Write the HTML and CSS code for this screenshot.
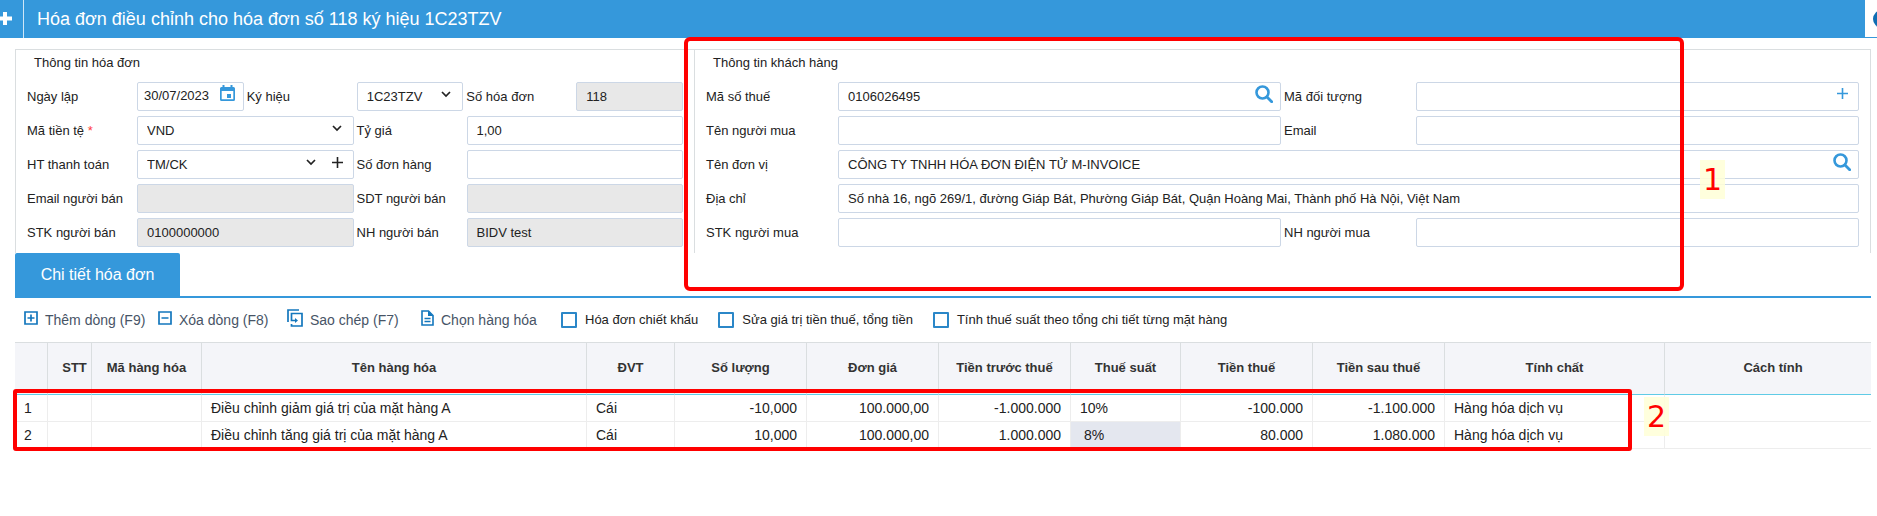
FILE: index.html
```html
<!DOCTYPE html>
<html lang="vi">
<head>
<meta charset="utf-8">
<title>Hóa đơn điều chỉnh</title>
<meta name="viewport" content="width=device-width, initial-scale=1">
<link rel="stylesheet" href="styles.css">
</head>
<body>
<header class="topbar">
  <button class="topbar-add" type="button" aria-label="Thêm">
    <svg width="12" height="13" viewBox="0 0 12 13"><path d="M0 6.500h12M5 0v13" stroke="currentColor" stroke-width="4"/></svg>
  </button>
  <h1 class="topbar-title">Hóa đơn điều chỉnh cho hóa đơn số 118 ký hiệu 1C23TZV</h1>
  <div class="topbar-end"><span class="topbar-dot"></span></div>
</header>

<main class="page">
  <form class="panels">
    <section class="panel panel-invoice">
      <h2 class="panel-title">Thông tin hóa đơn</h2>
      <div class="row">
        <label class="label" for="date">Ngày lập</label>
        <div class="field">
          <input class="input input-date" id="date" type="text" value="30/07/2023">
          <svg class="icon icon-date" width="15" height="17" viewBox="0 0 15 17"><path d="M2.500 0h2v2h6V0h2v2h1A1.500 1.500 0 0 1 15 3.500v11a1.500 1.500 0 0 1-1.500 1.500h-12A1.500 1.500 0 0 1 0 14.500v-11A1.500 1.500 0 0 1 1.500 2h1zM1.700 6v8.300h11.600V6zM7 9h4v4H7z" fill="currentColor" fill-rule="evenodd"/></svg>
        </div>
        <label class="label" for="serial">Ký hiệu</label>
        <div class="field">
          <select class="input" id="serial"><option>1C23TZV</option></select>
          <svg class="icon icon-chevron" width="10" height="7" viewBox="0 0 10 7"><path d="M1 1l4 4 4-4" fill="none" stroke="currentColor" stroke-width="1.700"/></svg>
        </div>
        <label class="label" for="number">Số hóa đơn</label>
        <div class="field"><input class="input" id="number" type="text" value="118" disabled></div>
      </div>
      <div class="row">
        <label class="label" for="currency">Mã tiền tệ <span class="required">*</span></label>
        <div class="field">
          <select class="input" id="currency"><option>VND</option></select>
          <svg class="icon icon-chevron" width="10" height="7" viewBox="0 0 10 7"><path d="M1 1l4 4 4-4" fill="none" stroke="currentColor" stroke-width="1.700"/></svg>
        </div>
        <label class="label" for="rate">Tỷ giá</label>
        <div class="field"><input class="input" id="rate" type="text" value="1,00"></div>
      </div>
      <div class="row">
        <label class="label" for="payment">HT thanh toán</label>
        <div class="field">
          <select class="input" id="payment"><option>TM/CK</option></select>
          <svg class="icon icon-chevron icon-shifted" width="10" height="7" viewBox="0 0 10 7"><path d="M1 1l4 4 4-4" fill="none" stroke="currentColor" stroke-width="1.700"/></svg>
          <svg class="icon icon-plus-dark" width="11" height="11" viewBox="0 0 11 11"><path d="M0 5.500h11M5.500 0v11" stroke="currentColor" stroke-width="1.600"/></svg>
        </div>
        <label class="label" for="order">Số đơn hàng</label>
        <div class="field"><input class="input" id="order" type="text"></div>
      </div>
      <div class="row">
        <label class="label" for="seller-email">Email người bán</label>
        <div class="field"><input class="input" id="seller-email" type="text" disabled></div>
        <label class="label" for="seller-phone">SDT người bán</label>
        <div class="field"><input class="input" id="seller-phone" type="text" disabled></div>
      </div>
      <div class="row">
        <label class="label" for="seller-account">STK người bán</label>
        <div class="field"><input class="input" id="seller-account" type="text" value="0100000000" disabled></div>
        <label class="label" for="seller-bank">NH người bán</label>
        <div class="field"><input class="input" id="seller-bank" type="text" value="BIDV test" disabled></div>
      </div>
    </section>

    <section class="panel panel-customer">
      <h2 class="panel-title">Thông tin khách hàng</h2>
      <div class="row">
        <label class="label" for="tax">Mã số thuế</label>
        <div class="field">
          <input class="input" id="tax" type="text" value="0106026495">
          <svg class="icon icon-search" width="18" height="18" viewBox="0 0 18 18"><circle cx="7.500" cy="7.500" r="6" fill="none" stroke="currentColor" stroke-width="2.600"/><path d="M12 12l4.700 4.700" stroke="currentColor" stroke-width="2.800" stroke-linecap="round"/></svg>
        </div>
        <label class="label" for="object">Mã đối tượng</label>
        <div class="field">
          <input class="input" id="object" type="text">
          <svg class="icon icon-plus" width="11" height="11" viewBox="0 0 11 11"><path d="M0 5.500h11M5.500 0v11" stroke="currentColor" stroke-width="1.600"/></svg>
        </div>
      </div>
      <div class="row">
        <label class="label" for="buyer">Tên người mua</label>
        <div class="field"><input class="input" id="buyer" type="text"></div>
        <label class="label" for="email">Email</label>
        <div class="field"><input class="input" id="email" type="text"></div>
      </div>
      <div class="row">
        <label class="label" for="company">Tên đơn vị</label>
        <div class="field">
          <input class="input" id="company" type="text" value="CÔNG TY TNHH HÓA ĐƠN ĐIỆN TỬ M-INVOICE">
          <svg class="icon icon-search" width="18" height="18" viewBox="0 0 18 18"><circle cx="7.500" cy="7.500" r="6" fill="none" stroke="currentColor" stroke-width="2.600"/><path d="M12 12l4.700 4.700" stroke="currentColor" stroke-width="2.800" stroke-linecap="round"/></svg>
        </div>
      </div>
      <div class="row">
        <label class="label" for="address">Địa chỉ</label>
        <div class="field"><input class="input" id="address" type="text" value="Số nhà 16, ngõ 269/1, đường Giáp Bát, Phường Giáp Bát, Quận Hoàng Mai, Thành phố Hà Nội, Việt Nam"></div>
      </div>
      <div class="row">
        <label class="label" for="buyer-account">STK người mua</label>
        <div class="field"><input class="input" id="buyer-account" type="text"></div>
        <label class="label" for="buyer-bank">NH người mua</label>
        <div class="field"><input class="input" id="buyer-bank" type="text"></div>
      </div>
    </section>
  </form>

  <nav class="tabs"><button class="tab" type="button">Chi tiết hóa đơn</button></nav>

  <div class="toolbar">
    <button class="tool tool-add" type="button"><svg width="14" height="14" viewBox="0 0 14 14"><path d="M1 1h12v12H1zM3.500 7h7M7 3.500v7" fill="none" stroke="currentColor" stroke-width="1.700"/></svg>Thêm dòng (F9)</button>
    <button class="tool tool-remove" type="button"><svg width="14" height="14" viewBox="0 0 14 14"><path d="M1 1h12v12H1zM3.500 7h7" fill="none" stroke="currentColor" stroke-width="1.700"/></svg>Xóa dòng (F8)</button>
    <button class="tool tool-copy" type="button"><svg width="16" height="18" viewBox="0 0 16 18"><path d="M1 13V1h11M4.500 15v2H15V4.500H4.500v7H9" fill="none" stroke="currentColor" stroke-width="1.700"/><path d="M8 9l3 2.500L8 14z" fill="currentColor"/></svg>Sao chép (F7)</button>
    <button class="tool tool-pick" type="button"><svg width="13" height="16" viewBox="0 0 13 16"><path d="M1 1h6.500L12 5.500V15H1zM3.500 8.500h6M3.500 11.500h6" fill="none" stroke="currentColor" stroke-width="1.600"/><path d="M7 1v5h5z" fill="currentColor"/></svg>Chọn hàng hóa</button>
    <label class="check"><input class="checkbox" type="checkbox">Hóa đơn chiết khấu</label>
    <label class="check"><input class="checkbox" type="checkbox">Sửa giá trị tiền thuế, tổng tiền</label>
    <label class="check"><input class="checkbox" type="checkbox">Tính thuế suất theo tổng chi tiết từng mặt hàng</label>
  </div>

  <table class="grid">
    <colgroup>
      <col class="w-index"><col class="w-stt"><col class="w-code"><col class="w-name"><col class="w-unit"><col class="w-money"><col class="w-money"><col class="w-money"><col class="w-code"><col class="w-money"><col class="w-money"><col class="w-kind"><col>
    </colgroup>
    <thead>
      <tr><th></th><th class="inset">STT</th><th>Mã hàng hóa</th><th>Tên hàng hóa</th><th>ĐVT</th><th>Số lượng</th><th>Đơn giá</th><th>Tiền trước thuế</th><th>Thuế suất</th><th>Tiền thuế</th><th>Tiền sau thuế</th><th>Tính chất</th><th class="inset">Cách tính</th></tr>
    </thead>
    <tbody>
      <tr><td>1</td><td></td><td></td><td>Điều chỉnh giảm giá trị của mặt hàng A</td><td>Cái</td><td class="num">-10,000</td><td class="num">100.000,00</td><td class="num">-1.000.000</td><td>10%</td><td class="num">-100.000</td><td class="num">-1.100.000</td><td>Hàng hóa dịch vụ</td><td></td></tr>
      <tr><td>2</td><td></td><td></td><td>Điều chỉnh tăng giá trị của mặt hàng A</td><td>Cái</td><td class="num">10,000</td><td class="num">100.000,00</td><td class="num">1.000.000</td><td class="selected">8%</td><td class="num">80.000</td><td class="num">1.080.000</td><td>Hàng hóa dịch vụ</td><td></td></tr>
    </tbody>
  </table>
</main>

<div class="mark mark-customer"></div>
<div class="mark mark-rows"></div>
<div class="note note-customer">1</div>
<div class="note note-rows">2</div>
</body>
</html>
```

FILE: styles.css
```css
* { box-sizing: border-box; }

body {
  margin: 0;
  position: relative;
  min-height: 100vh;
  background: #fff;
  color: #222;
  font: 13px/16px "Liberation Sans", Arial, sans-serif;
}

button, input, select { font: inherit; color: inherit; margin: 0; }

/* Title bar */
.topbar {
  display: flex;
  height: 38px;
  background: #3598db;
  color: #fff;
}
.topbar-add {
  width: 24px;
  padding: 0 0 2px;
  border: 0;
  border-right: 1px solid #cfe6f7;
  background: none;
  text-align: left;
}
.topbar-add svg { display: block; }
.topbar-title {
  flex: 1;
  margin: 0;
  padding-left: 13px;
  font-size: 18px;
  font-weight: 400;
  line-height: 38px;
}
.topbar-end {
  display: flex;
  align-items: center;
  width: 12px;
  overflow: hidden;
  border-bottom: 1px solid #3598db;
  background: #fff;
  padding-left: 8px;
}
.topbar-dot {
  flex: none;
  width: 18px;
  height: 18px;
  border-radius: 50%;
  background: #0f6db3;
}

.page { padding: 11px 6px 0 15px; }

/* Form panels */
.panels {
  display: grid;
  grid-template-columns: 678fr 1176fr;
  border: 1px solid #dadee0;
  border-bottom: 0;
}
.panel {
  display: flex;
  flex-direction: column;
  gap: 5px;
  min-width: 0;
  padding: 0 11px 6px;
}
.panel-invoice { --label: 110px; }
.panel-customer { border-left: 1px solid #dadee0; --label: 132px; }
.panel-title {
  margin: 0;
  padding: 3px 7px 4px;
  font-size: 13px;
  font-weight: 400;
  line-height: 20px;
}
.row { display: flex; }
.label { flex: none; width: var(--label); line-height: 29px; }
.field + .label { margin-left: 3px; }
.required { color: #ff3b3b; }
.field { position: relative; flex: 1; min-width: 0; }
.input {
  display: block;
  width: 100%;
  height: 29px;
  padding: 0 9px;
  border: 1px solid #ccd7e6;
  border-radius: 2px;
  background: #fff;
  appearance: none;
}
.input:disabled { background: #e8e8e8; color: #222; opacity: 1; }
.input-date { padding: 0 6px 3px; }
.icon { position: absolute; pointer-events: none; }
.icon-date { top: 3px; right: 9px; color: #3598db; }
.icon-chevron { top: 9px; right: 12px; }
.icon-shifted { right: 38px; }
.icon-plus-dark { top: 7px; right: 11px; }
.icon-search { top: 3px; right: 8px; color: #3598db; }
.icon-plus { top: 6px; right: 11px; color: #3598db; }

/* Tabs */
.tabs { display: flex; height: 45px; border-bottom: 2px solid #3598db; }
.tab {
  width: 165px;
  border: 0;
  border-radius: 2px 2px 0 0;
  background: #3598db;
  color: #fff;
  font-size: 16px;
  padding: 0;
}

/* Toolbar */
.toolbar { display: flex; align-items: center; height: 44px; padding-left: 9px; }
.tool {
  display: flex;
  align-items: center;
  gap: 7px;
  padding: 0;
  border: 0;
  background: none;
  color: #475466;
  font-size: 14px;
  white-space: nowrap;
}
.tool svg { flex: none; margin-bottom: 5px; color: #1377bd; }
.tool-add { width: 134px; }
.tool-remove { width: 129px; }
.tool-copy { width: 134px; }
.tool-pick { width: 140px; }
.check { display: flex; align-items: center; gap: 8px; margin-right: 20px; white-space: nowrap; }
.checkbox {
  width: 16px;
  height: 16px;
  margin: 0;
  border: 2px solid #2b87c8;
  border-radius: 1px;
  background: #fff;
  appearance: none;
}

/* Line items */
.grid { width: 100%; border-collapse: separate; border-spacing: 0; table-layout: fixed; }
.w-index { width: 33px; }
.w-stt { width: 44px; }
.w-code { width: 110px; }
.w-name { width: 385px; }
.w-unit { width: 88px; }
.w-money { width: 132px; }
.w-kind { width: 220px; }
.grid th {
  height: 53px;
  padding: 0 0 2px;
  border: solid #dadee0;
  border-width: 1px 1px 0 0;
  border-bottom: 1px solid #5fcbe6;
  background: #f4f5f9;
  color: #333;
  white-space: nowrap;
}
.grid .inset { padding-left: 10px; }
.grid td {
  height: 27px;
  padding: 0 9px;
  border: solid #ededed;
  border-width: 0 1px 1px 0;
  font-size: 14px;
  white-space: nowrap;
}
.grid th:last-child, .grid td:last-child { border-right: 0; }
.grid .num { text-align: right; }
.grid .selected { padding-left: 13px; background: #e4e7ef; }

/* Review annotations laid over the form */
.mark { position: absolute; border: 4px solid #f00; pointer-events: none; }
.mark-customer { left: 684px; top: 37px; width: 1000px; height: 254px; border-radius: 6px; }
.mark-rows { left: 13px; top: 389px; width: 1619px; height: 62px; border-radius: 3px; }
.note {
  position: absolute;
  width: 25px;
  height: 39px;
  background: rgba(255, 255, 215, 0.85);
  color: #f00;
  font: 30px/39px "DejaVu Sans", Tahoma, sans-serif;
  text-align: center;
}
.note-customer { left: 1700px; top: 160px; }
.note-rows { left: 1644px; top: 397px; }
```
